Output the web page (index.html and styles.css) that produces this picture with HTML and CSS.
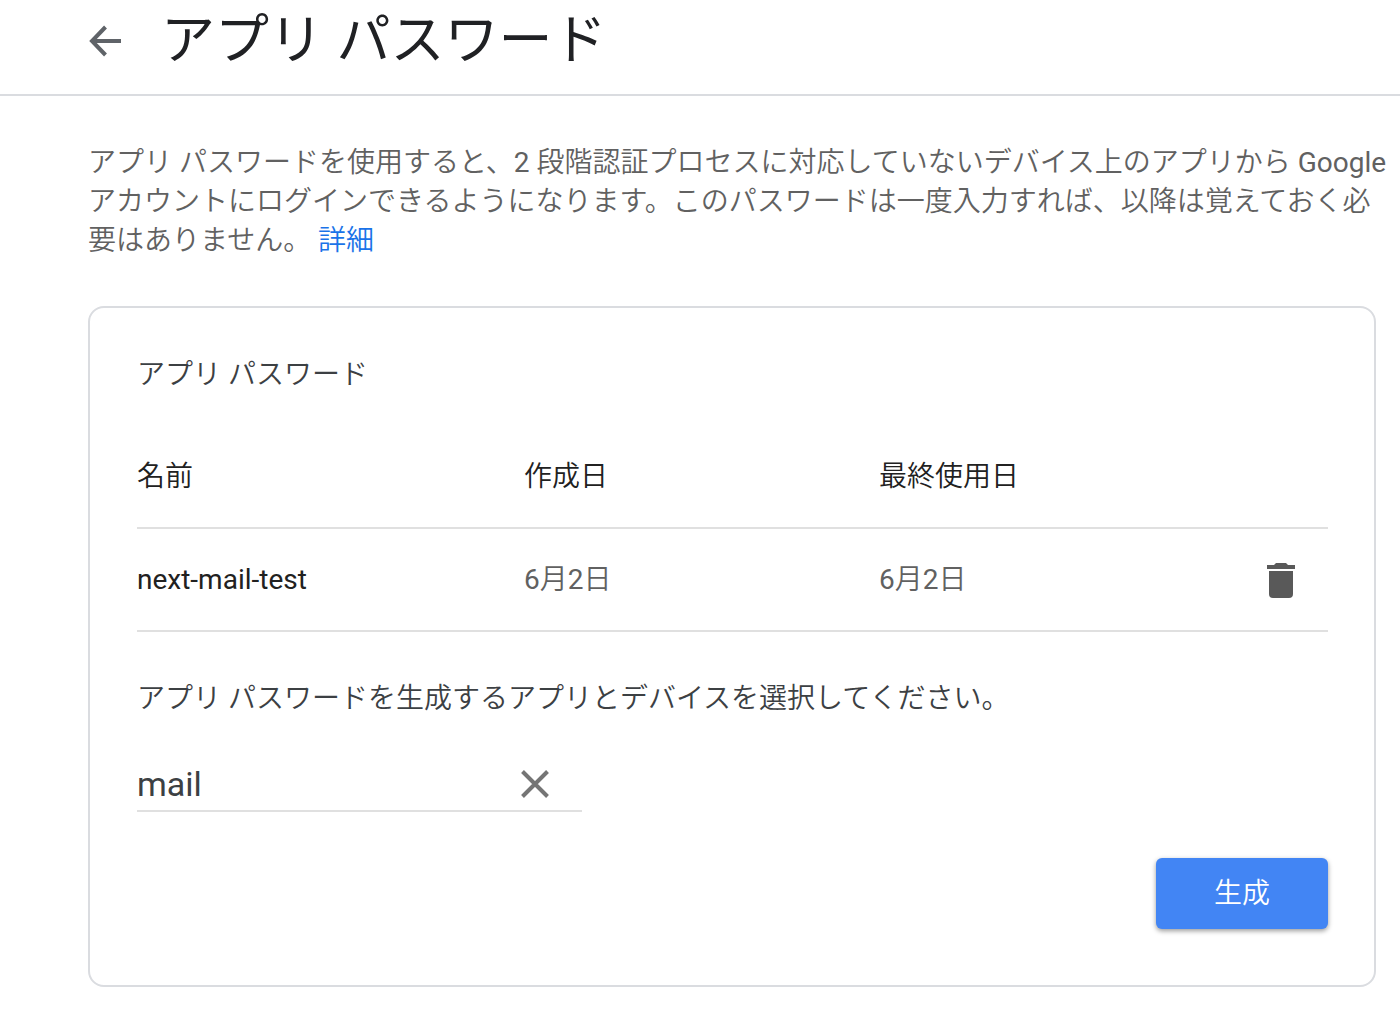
FILE: index.html
```html
<!DOCTYPE html>
<html lang="ja">
<head>
    <meta charset="UTF-8">
    <meta name="viewport" content="width=device-width, initial-scale=1.0">
    <title>アプリ パスワード</title>
    <link rel="stylesheet" href="styles.css">
</head>
<body>
    <header class="header">
        <a class="back" href="#" aria-label="戻る">
            <svg width="32" height="32" viewBox="0 0 32 32">
                <path d="M32 16H3M16.500 2L3 16L16.500 30" fill="none" stroke="#5f6368" stroke-width="4"/>
            </svg>
        </a>
        <h1>アプリ パスワード</h1>
    </header>
    <main>
        <p class="intro">アプリ パスワードを使用すると、2 段階認証プロセスに対応していないデバイス上のアプリから Google<br>
            アカウントにログインできるようになります。このパスワードは一度入力すれば、以降は覚えておく必<br>
            要はありません。 <a href="#">詳細</a></p>
        <section class="card">
            <h2>アプリ パスワード</h2>
            <table>
                <thead>
                    <tr>
                        <th class="name">名前</th>
                        <th class="created">作成日</th>
                        <th class="used">最終使用日</th>
                        <th></th>
                    </tr>
                </thead>
                <tbody>
                    <tr>
                        <td class="name">next-mail-test</td>
                        <td>6月2日</td>
                        <td>6月2日</td>
                        <td class="action">
                            <button class="icon" type="button" aria-label="削除">
                                <svg width="28" height="36" viewBox="0 0 28 36">
                                    <path d="M0 2h7l2-2h10l2 2h7v4H0zM2 8h24v23a4 4 0 0 1-4 4H6a4 4 0 0 1-4-4z" fill="#595959"/>
                                </svg>
                            </button>
                        </td>
                    </tr>
                </tbody>
            </table>
            <form>
                <label for="app">アプリ パスワードを生成するアプリとデバイスを選択してください。</label>
                <div class="field">
                    <input type="text" id="app" value="mail">
                    <button class="icon" type="button" aria-label="クリア">
                        <svg width="28" height="28" viewBox="0 0 28 28">
                            <path d="M1.500 1.500L26.500 26.500M26.500 1.500L1.500 26.500" fill="none" stroke="#757575" stroke-width="4"/>
                        </svg>
                    </button>
                </div>
                <button class="generate" type="button">生成</button>
            </form>
        </section>
    </main>
</body>
</html>
```
FILE: styles.css
```css
* {
    box-sizing: border-box;
}
body {
    margin: 0;
    background-color: #fff;
    color: #3c4043;
    font: 28px/39px Roboto, "Noto Sans CJK JP DemiLight", "Noto Sans CJK JP", sans-serif;
}
h1, h2, p {
    margin: 0;
    font-weight: 400;
}
a {
    color: #1a73e8;
    text-decoration: none;
}
.header {
    display: flex;
    align-items: center;
    gap: 40px;
    padding: 0 24px 12px 89px;
    border-bottom: 2px solid #dadce0;
}
.back {
    display: flex;
}
h1 {
    color: #202124;
    font: 54px/82px Roboto, "Noto Sans CJK JP", sans-serif;
}
main {
    padding: 47px 24px 49px 88px;
}
.intro {
    color: #616161;
    white-space: nowrap;
}
.card {
    margin-top: 46px;
    padding: 47px 46px 56px 47px;
    border: 2px solid #dadce0;
    border-radius: 16px;
}
h2 {
    margin-bottom: 31px;
    font-size: 28px;
}
table {
    width: 100%;
    table-layout: fixed;
    border-collapse: collapse;
}
th, td {
    height: 103px;
    padding: 0;
    border-bottom: 2px solid #e0e0e0;
    text-align: left;
    font-weight: 400;
}
th, td.name {
    color: #212121;
}
td {
    color: #616161;
}
th.name {
    width: 32.5%;
}
th.created, th.used {
    width: 29.8%;
}
td.action {
    padding-right: 33px;
    text-align: right;
}
.icon {
    display: inline-flex;
    padding: 0;
    border: 0;
    background: none;
    vertical-align: middle;
}
form {
    display: flex;
    flex-direction: column;
    margin-top: 47px;
}
.field {
    display: flex;
    align-items: center;
    width: 445px;
    height: 54px;
    margin-top: 40px;
    padding-right: 33px;
    border-bottom: 2px solid #e0e0e0;
}
input {
    flex: 1;
    min-width: 0;
    padding: 0;
    border: 0;
    outline: 0;
    color: #3c4043;
    background: none;
    font: 34px/52px Roboto, "Noto Sans CJK JP", sans-serif;
}
.generate {
    align-self: flex-end;
    width: 172px;
    height: 71px;
    margin-top: 46px;
    padding: 0;
    border: 0;
    border-radius: 6px;
    color: #fff;
    background-color: #4285f4;
    box-shadow: 0 2px 5px rgba(0, 0, 0, .4);
    font: 28px/39px Roboto, "Noto Sans CJK JP DemiLight", "Noto Sans CJK JP", sans-serif;
}
```
